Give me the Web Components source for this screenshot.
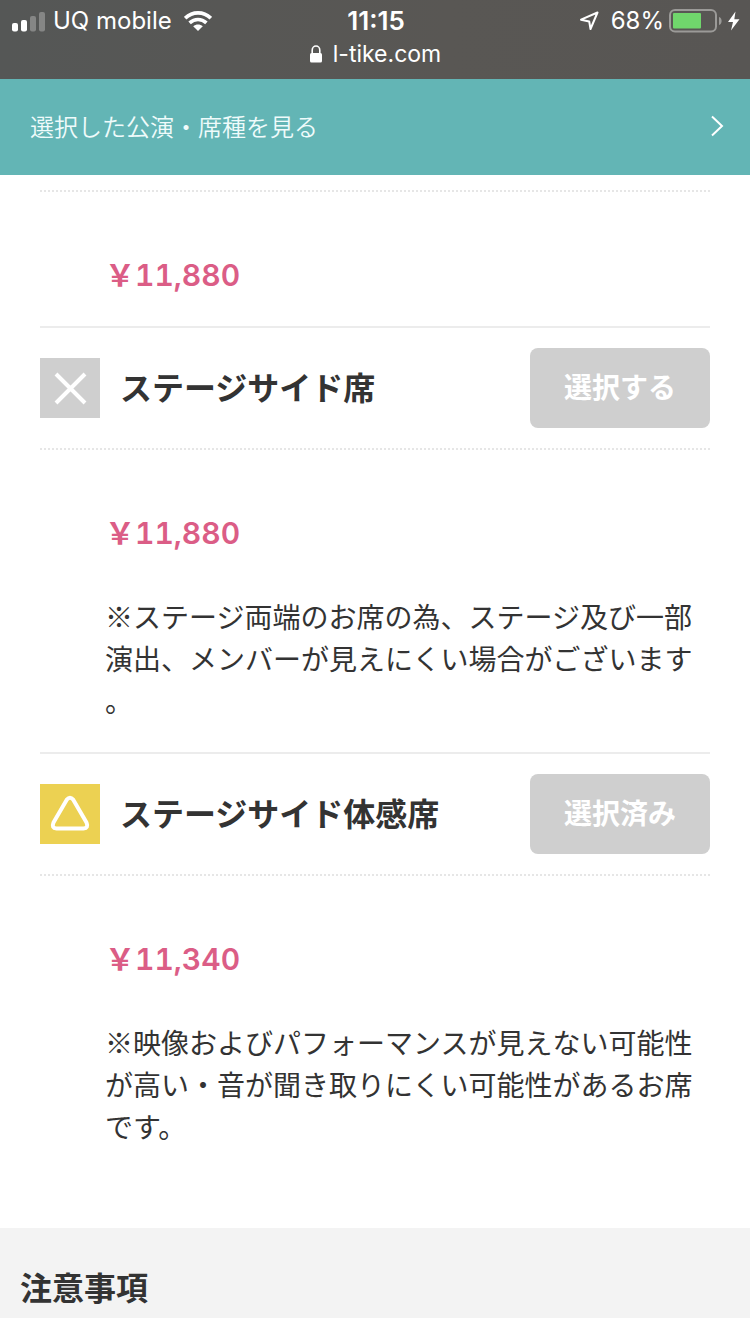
<!DOCTYPE html>
<html lang="ja">
<head>
<meta charset="utf-8">
<meta name="viewport" content="width=device-width, initial-scale=1">
<title>席種の選択</title>
<style>
  body { margin: 0; background: #fff; color: #333; font-family: "Noto Sans CJK JP", sans-serif; }
</style>
</head>
<body>
<ticket-app></ticket-app>

<script>
const define = (name, html) => {
  const template = document.createElement('template');
  template.innerHTML = html;
  customElements.define(name, class extends HTMLElement {
    constructor() {
      super();
      this.attachShadow({ mode: 'open' }).append(template.content.cloneNode(true));
    }
  });
};

define('status-bar', `
<style>
  :host { display: block; height: 79px; background: linear-gradient(90deg, #555756, #595754 60%, #585654); color: #fff; font: 400 24px/32px Inter, sans-serif; }
  .row { display: grid; grid-template-columns: 1fr auto 1fr; align-items: center; padding: 5px 10px 0 12px; }
  .side { display: flex; align-items: center; }
  .right { justify-content: flex-end; }
  .time { font-size: 26px; font-weight: 600; }
  .host { display: flex; justify-content: center; align-items: center; gap: 10px; padding-top: 1px; font-size: 23px; }
  svg { display: block; flex: none; }
  .signal { margin-right: 7px; }
  .wifi { margin-left: 12px; }
  .arrow { margin-right: 12px; }
  .battery { margin: 0 5px; }
</style>
<div class="row">
  <div class="side">
    <svg class="signal" width="34" height="21" viewBox="0 0 34 21" fill="#fff" aria-hidden="true">
      <rect y="12" width="6" height="8.500" rx="2"/><rect x="9" y="9" width="6" height="11.500" rx="2"/>
      <g fill="#858685"><rect x="18" y="5" width="6" height="15.500" rx="2"/><rect x="27" y="1" width="6" height="19.500" rx="2"/></g>
    </svg>
    <span>UQ mobile</span>
    <svg class="wifi" width="28" height="20" viewBox="0 0 28 20" aria-hidden="true">
      <g fill="none" stroke="#fff" stroke-width="3.600">
        <path d="M1.200 7.200C8.500 .100 19.500 .100 26.800 7.200"/><path d="M5.600 11.800C10.500 7.300 17.500 7.300 22.400 11.800"/>
      </g>
      <path d="M9.200 15.200C12 12.800 16 12.800 18.800 15.200L14 20Z" fill="#fff"/>
    </svg>
  </div>
  <span class="time">11:15</span>
  <div class="side right">
    <svg class="arrow" width="20" height="20" viewBox="0 0 20 20" fill="none" stroke="#fff" stroke-width="2" stroke-linejoin="round" aria-hidden="true"><path d="M18.500 1.500 11.500 18 10.200 10.400 2 8.700Z"/></svg>
    <span>68%</span>
    <svg class="battery" width="54" height="24" viewBox="0 0 54 24" aria-hidden="true">
      <rect x="1" y="1" width="46" height="21.500" rx="5" fill="none" stroke="#9b9a98" stroke-width="2"/>
      <rect x="4" y="4" width="28" height="15.500" rx="1" fill="#70d66c"/>
      <path d="M50 8C53.500 9 53.500 15 50 16Z" fill="#9b9a98"/>
    </svg>
    <svg width="12" height="20" viewBox="0 0 12 20" fill="#fff" aria-hidden="true"><path d="M7.500 .500 0 11H5L3 19.500 11.500 8.200H6.300Z"/></svg>
  </div>
</div>
<div class="host">
  <svg width="14" height="18" viewBox="0 0 14 18" aria-hidden="true"><rect x="1" y="8" width="12" height="9.500" rx="1.500" fill="#fff"/><path d="M3.200 8.500V5.200a3.800 4.200 0 0 1 7.600 0V8.500" fill="none" stroke="#fff" stroke-width="1.600"/></svg>
  <span>l-tike.com</span>
</div>`);

define('selection-link', `
<style>
  :host { display: block; }
  a { display: flex; justify-content: space-between; align-items: center; padding: 29px 26px 31px 30px; background: #63b5b5; color: #effbfb; font-size: 24px; font-weight: 350; line-height: 36px; text-decoration: none; }
  svg { display: block; flex: none; }
</style>
<a href="#selection"><slot></slot>
  <svg width="14" height="22" viewBox="0 0 14 22" fill="none" stroke="#fff" stroke-width="2" aria-hidden="true"><path d="M2 1.500 12 11 2 20.500"/></svg>
</a>`);

define('status-icon', `
<style>
  :host { display: block; flex: none; width: 60px; height: 60px; background: #cfcfcf; }
  :host([kind="few"]) { background: #ecd152; }
  svg { display: block; fill: none; stroke: #fff; stroke-width: 4; stroke-linejoin: round; }
  .few, :host([kind="few"]) .none { display: none; }
  :host([kind="few"]) .few { display: inline; }
</style>
<svg width="60" height="60" viewBox="0 0 60 60" aria-hidden="true">
  <path class="none" d="M16 16 45 45M45 16 16 45"/>
  <path class="few" d="M26.900 15.600Q30 11.700 33.100 15.600L46.500 38.500Q48.800 44.200 43.500 44.500H16.500Q11.200 44.200 13.500 38.500Z"/>
</svg>`);

define('seat-head', `
<style>
  :host { display: flex; align-items: center; gap: 20px; padding: 20px 0; border-top: 2px solid #ececec; }
  .name { flex: 1; padding-bottom: 4px; }
  ::slotted(h2) { margin: 0; font-size: 32px; font-weight: 700; line-height: 48px; }
</style>
<slot name="icon"></slot><div class="name"><slot></slot></div><slot name="action"></slot>`);

define('select-button', `
<style>
  :host { display: block; flex: none; }
  button { display: block; width: 180px; height: 80px; padding: 0 0 4px; border: 0; border-radius: 8px; background: #cfcfcf; color: #fff; font: 700 28px/40px "Noto Sans CJK JP", sans-serif; }
</style>
<button type="button" disabled><slot></slot></button>`);

define('seat-detail', `
<style>
  :host { display: block; padding: 62px 0 30px 65px; border-top: 2px dotted #e6e6e6; line-height: 42px; }
  ::slotted(p) { margin: 41px 0 1px; font-size: 28px; line-break: anywhere; }
  .price { color: #db5d86; font: 600 30px/42px Inter, "Noto Sans CJK JP", sans-serif; font-variant-numeric: tabular-nums; }
</style>
<div class="price"><slot name="price"></slot></div><slot></slot>`);

define('notice-section', `
<style>
  :host { display: block; padding: 34px 20px 8px; background: #f3f3f3; }
  ::slotted(h2) { margin: 0; font-size: 32px; font-weight: 700; line-height: 48px; }
</style>
<slot></slot>`);

define('ticket-app', `
<style>
  :host { display: block; }
  main { padding: 15px 40px 50px; }
</style>
<status-bar></status-bar>
<selection-link>選択した公演・席種を見る</selection-link>
<main>
  <seat-detail><span slot="price">￥11,880</span></seat-detail>
  <seat-head><status-icon slot="icon"></status-icon><h2>ステージサイド席</h2><select-button slot="action">選択する</select-button></seat-head>
  <seat-detail><span slot="price">￥11,880</span><p>※ステージ両端のお席の為、ステージ及び一部演出、メンバーが見えにくい場合がございます。</p></seat-detail>
  <seat-head><status-icon slot="icon" kind="few"></status-icon><h2>ステージサイド体感席</h2><select-button slot="action">選択済み</select-button></seat-head>
  <seat-detail><span slot="price">￥11,340</span><p>※映像およびパフォーマンスが見えない可能性が高い・音が聞き取りにくい可能性があるお席です。</p></seat-detail>
</main>
<notice-section><h2>注意事項</h2></notice-section>`);
</script>
</body>
</html>
